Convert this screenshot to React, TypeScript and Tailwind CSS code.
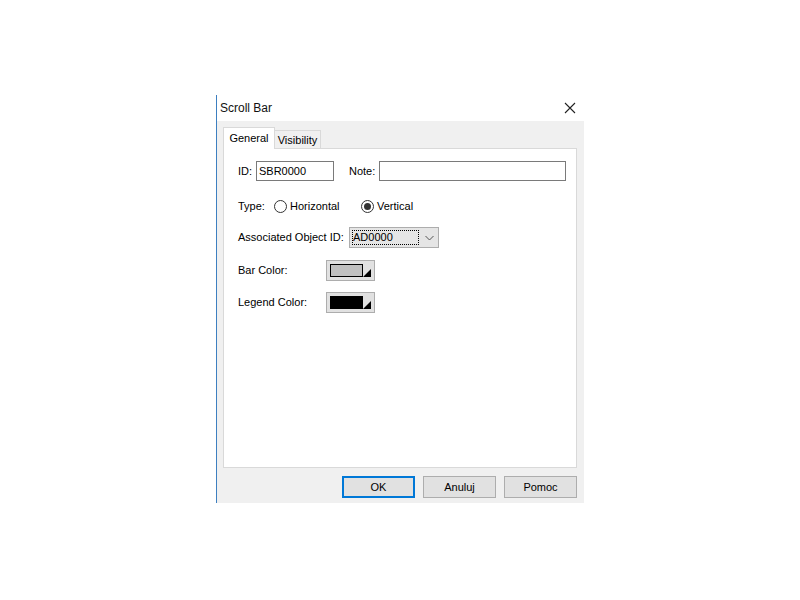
import React from 'react';

const font = { fontFamily: '"Liberation Sans", Arial, sans-serif' };

function Radio({ checked }: { checked?: boolean }) {
  return (
    <span className="w-[13px] h-[13px] rounded-full border border-[#333] bg-white flex items-center justify-center">
      {checked && <span className="w-[7px] h-[7px] rounded-full bg-[#333]" />}
    </span>
  );
}

function ColorButton({ color }: { color: string }) {
  return (
    <div className="relative w-[49px] h-[21px] border border-[#adadad] bg-[#e1e1e1]">
      <div className={`absolute left-[3px] top-[3px] w-[33px] h-[13px] border border-black ${color}`} />
      <svg className="absolute right-[3px] bottom-[3px]" width="8" height="8" viewBox="0 0 8 8">
        <polygon points="8,0 8,8 0,8" fill="#000" />
      </svg>
    </div>
  );
}

export default function App() {
  return (
    <div className="w-[800px] h-[600px] bg-white pt-[95px] pl-[216px] text-[12px] text-black" style={font}>
      <div className="w-[368px] h-[408px] border-l border-[#3d7fc0] flex flex-col">
        {/* title bar */}
        <div className="h-[26px] bg-white flex items-center justify-between pl-[3px] pr-[8px]">
          <span className="text-[12px] text-[#111]">Scroll Bar</span>
          <svg width="12" height="12" viewBox="0 0 12 12">
            <path d="M1 1 L11 11 M11 1 L1 11" stroke="#222" strokeWidth="1.1" />
          </svg>
        </div>

        {/* body */}
        <div className="flex-1 bg-[#f0f0f0] pl-[6px] pr-[6px] pt-[6px] flex flex-col text-[11px]">
          <div className="flex items-end h-[22px]">
            <div className="h-[22px] w-[52px] bg-white border border-b-0 border-[#d9d9d9] flex items-center justify-center relative z-10">
              General
            </div>
            <div className="h-[19px] w-[46px] bg-[#f0f0f0] border border-l-0 border-b-0 border-[#d9d9d9] flex items-center justify-center">
              Visibility
            </div>
          </div>
          <div className="w-[354px] h-[320px] -mt-px bg-white border border-[#d9d9d9] pl-[14px] pt-[12px] flex flex-col">
            <div className="flex items-center h-[20px]">
              <span className="w-[18px]">ID:</span>
              <div className="w-[78px] h-[20px] border border-[#7a7a7a] px-[2px] flex items-center">SBR0000</div>
              <span className="ml-[15px] w-[30px]">Note:</span>
              <div className="w-[187px] h-[20px] border border-[#7a7a7a]" />
            </div>

            <div className="flex items-center h-[16px] mt-[17px]">
              <span className="w-[36px]">Type:</span>
              <Radio />
              <span className="ml-[3px] w-[71px]">Horizontal</span>
              <Radio checked />
              <span className="ml-[3px]">Vertical</span>
            </div>

            <div className="flex items-center h-[21px] mt-[13px]">
              <span className="w-[111px]">Associated Object ID:</span>
              <div className="w-[90px] h-[21px] border border-[#adadad] bg-[#e5e5e5] flex items-center pl-[2px]">
                <div className="w-[67px] h-[15px] border border-dotted border-black flex items-center">AD0000</div>
                <svg className="ml-[6px]" width="9" height="6" viewBox="0 0 9 6">
                  <path d="M0.5 1 L4.5 5 L8.5 1" stroke="#555" fill="none" strokeWidth="1" />
                </svg>
              </div>
            </div>

            <div className="flex items-center h-[21px] mt-[12px]">
              <span className="w-[88px]">Bar Color:</span>
              <ColorButton color="bg-[#c0c0c0]" />
            </div>

            <div className="flex items-center h-[21px] mt-[11px]">
              <span className="w-[88px]">Legend Color:</span>
              <ColorButton color="bg-black" />
            </div>
          </div>

          <div className="flex justify-end gap-[8px] mt-[8px] w-[354px]">
            <button className="w-[73px] h-[22px] bg-[#e1e1e1] border-2 border-[#0078d7] flex items-center justify-center">OK</button>
            <button className="w-[73px] h-[22px] bg-[#e1e1e1] border border-[#adadad] flex items-center justify-center">Anuluj</button>
            <button className="w-[73px] h-[22px] bg-[#e1e1e1] border border-[#adadad] flex items-center justify-center">Pomoc</button>
          </div>
        </div>
      </div>
    </div>
  );
}
